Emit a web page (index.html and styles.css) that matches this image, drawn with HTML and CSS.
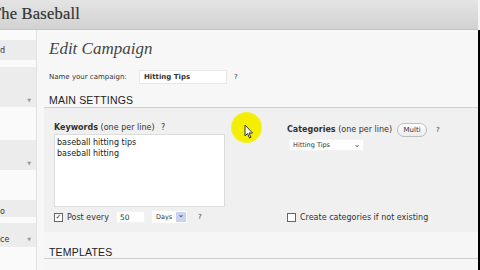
FILE: index.html
```html
<!DOCTYPE html>
<html>
<head>
<meta charset="utf-8">
<link rel="stylesheet" href="styles.css">
</head>
<body>
<div class="screen">
  <div class="header"><span class="site">The Baseball</span></div>
  <div class="layout">
    <div class="sidebar">
      <div class="sb w h10"></div>
      <div class="sb g h20"><span class="sbt">d</span></div>
      <div class="sb w h7"></div>
      <div class="sb g h40 arr"><span class="tri">▼</span></div>
      <div class="sb w h33"></div>
      <div class="sb g h30 arr"><span class="tri">▼</span></div>
      <div class="sb w h30"></div>
      <div class="sb g h17"><span class="sbt">o</span></div>
      <div class="sb w h6"></div>
      <div class="sb g h24 arr"><span class="sbt">ce</span><span class="tri">▼</span></div>
      <div class="sb w fill"></div>
    </div>
    <div class="main">
      <div class="top">
        <h1 class="title">Edit Campaign</h1>
        <div class="name-row">
          <span class="name-label">Name your campaign:</span>
          <span class="input name-input">Hitting Tips</span>
          <span class="help">?</span>
        </div>
        <h2 class="heading">MAIN SETTINGS</h2>
      </div>
      <div class="settings">
        <div class="grid">
          <div class="kw">
            <div class="label"><b>Keywords</b> (one per line) <span class="q">?</span></div>
            <div class="textarea">baseball hitting tips<br>baseball hitting</div>
          </div>
          <div class="cat">
            <div class="cat-row">
              <span class="label"><b>Categories</b> (one per line)</span>
              <span class="pill">Multi</span>
              <span class="help">?</span>
            </div>
            <div class="select cat-select"><span>Hitting Tips</span><span class="sarr">⌄</span></div>
          </div>
          <div class="post-row">
            <span class="check on">✓</span>
            <span class="post-label">Post every</span>
            <span class="input num">50</span>
            <span class="select days"><span>Days</span><span class="darr">⌄</span></span>
            <span class="help">?</span>
          </div>
          <div class="create-row">
            <span class="check"></span>
            <span class="create-label">Create categories if not existing</span>
          </div>
        </div>
      </div>
      <div class="templates">
        <h2 class="heading">TEMPLATES</h2>
      </div>
    </div>
    <div class="edge"></div>
  </div>
  <div class="spot"></div>
  <svg class="cursor" width="10" height="16" viewBox="0 0 10 16"><path d="M1 1 L1 12 L3.5 9.5 L5.5 14 L7 13.3 L5 9 L8.5 9 Z" fill="#fff" stroke="#333" stroke-width="1"/></svg>
</div>
</body>
</html>
```

FILE: styles.css
```css
* { box-sizing: border-box; margin: 0; padding: 0; }
html, body { width: 480px; height: 270px; overflow: hidden; background: #000; }
body { font-family: "DejaVu Sans", sans-serif; color: #333; }
.screen { position: relative; width: 480px; height: 270px; overflow: hidden; background: #f6f6f6; }

.header {
  height: 30px;
  width: 478px;
  background: linear-gradient(#e4e4e4, #d2d2d2);
  border-bottom: 1px solid #c4c4c4;
  display: flex;
  align-items: center;
  overflow: hidden;
}
.site {
  font-family: "Liberation Serif", serif;
  font-size: 16.5px;
  color: #333;
  margin-left: -9px;
  margin-top: -2px;
  letter-spacing: 0.2px;
  -webkit-text-stroke: 0.2px #333;
}

.layout { display: flex; height: 240px; }
.sidebar { width: 37px; display: flex; flex-direction: column; border-right: 1px solid #e2e2e2; background: #fafafa; overflow: hidden; }
.sb { position: relative; font-size: 7px; color: #333; }
.sb.w { background: #fafafa; }
.sb.g { background: #ececec; }
.h10 { height: 10px; } .h20 { height: 20px; } .h7 { height: 7px; } .h40 { height: 40px; }
.h33 { height: 33px; } .h30 { height: 30px; } .h17 { height: 17px; } .h6 { height: 6px; }
.h24 { height: 24px; } .fill { flex: 1; }
.h20 { display: flex; align-items: center; }
.h17 { display: flex; align-items: flex-end; padding-bottom: 1px; }
.sbt { font-size: 8px; }
.arr { display: flex; align-items: flex-end; justify-content: space-between; padding: 0 5px 4px 0; }
.h24.arr { align-items: center; padding-bottom: 0; padding-top: 8px; }
.tri { font-size: 5px; color: #999; margin-left: auto; }

.main { flex: 1; display: flex; flex-direction: column; padding-left: 7px; background: #f7f7f7; }
.top { padding-top: 8px; padding-left: 5px; }
.title {
  font-family: "Liberation Serif", serif;
  font-style: italic;
  font-weight: normal;
  font-size: 17px;
  line-height: 22px;
  color: #464646;
}
.name-row { display: flex; align-items: center; height: 14px; margin-top: 10px; font-size: 7px; color: #333; }
.name-label { width: 90px; }
.input { background: #fff; border: 1px solid #e8e8e8; display: flex; align-items: center; }
.name-input { width: 88px; height: 14px; padding-left: 4px; font-weight: bold; font-size: 7px; }
.help { font-size: 7px; color: #333; margin-left: 7px; }

.heading {
  font-family: "Liberation Sans", sans-serif;
  font-weight: normal;
  font-size: 10.5px;
  line-height: 13px;
  color: #222;
  padding-top: 10px;
  padding-left: 5px;
  margin-left: -5px;
  border-bottom: 1px solid #cfcfcf;
  box-sizing: content-box;
  height: 13px;
  letter-spacing: 0.2px;
}

.settings { background: #f0f0f0; height: 124px; padding: 15px 0 0 10px; }
.grid { display: grid; grid-template-columns: 171px 1fr; column-gap: 62px; row-gap: 4px; }
.label { font-size: 8px; line-height: 10px; color: #333; }
.label b { font-weight: bold; }
.q { margin-left: 4px; }
.textarea {
  margin-top: 1px;
  height: 73px;
  background: #fff;
  border: 1px solid #dcdcdc;
  padding: 3px 2px;
  font-size: 8px;
  line-height: 10.5px;
  color: #222;
}
.cat-row { display: flex; align-items: center; height: 14px; }
.pill {
  margin-left: 5px;
  width: 30px;
  height: 14px;
  border: 1px solid #bdbdbd;
  border-radius: 7px;
  background: linear-gradient(#fff, #ececec);
  font-size: 7px;
  display: flex;
  align-items: center;
  justify-content: center;
}
.cat-row .help { margin-left: 9px; }
.select { display: flex; align-items: center; background: #fff; font-size: 6.5px; color: #333; }
.cat-select { margin-top: 2px; margin-left: 2px; width: 75px; height: 12px; padding-left: 3px; border: 1px solid #f2f2f2; }
.sarr { margin-left: auto; width: 12px; text-align: center; color: #556; font-size: 8px; line-height: 6px; }

.post-row { display: flex; align-items: center; height: 12px; font-size: 8px; }
.check {
  width: 9px; height: 9px;
  border: 1px solid #666;
  background: #fff;
  font-size: 7px;
  line-height: 7px;
  text-align: center;
  color: #333;
  font-weight: bold;
}
.post-label { margin-left: 4px; color: #333; }
.num { margin-left: 7px; width: 29px; height: 12px; padding-left: 3px; font-size: 7.5px; border-color: #f2f2f2; }
.days { margin-left: 7px; width: 35px; height: 12px; padding-left: 4px; font-size: 6.5px; }
.darr { margin-left: auto; width: 10px; height: 10px; margin-right: 1px; background: #c9d3ef; color: #2a3b7a; font-size: 8px; line-height: 5px; text-align: center; }
.days + .help { margin-left: 11px; }
.create-row { display: flex; align-items: center; height: 12px; font-size: 8px; }
.create-label { margin-left: 4px; color: #333; }

.templates { flex: 1; padding-left: 5px; background: #f6f6f6; }
.templates .heading { padding-top: 14px; height: 12px; line-height: 12px; }

.edge { width: 2px; background: #000; }

.spot {
  position: absolute;
  left: 231px; top: 112px;
  width: 31px; height: 31px;
  border-radius: 50%;
  background: radial-gradient(circle, #f4ef00 0, #f4ef00 60%, rgba(244,239,0,0.6) 80%, rgba(244,239,0,0) 100%);
}
.cursor { position: absolute; left: 244px; top: 124px; }
```
